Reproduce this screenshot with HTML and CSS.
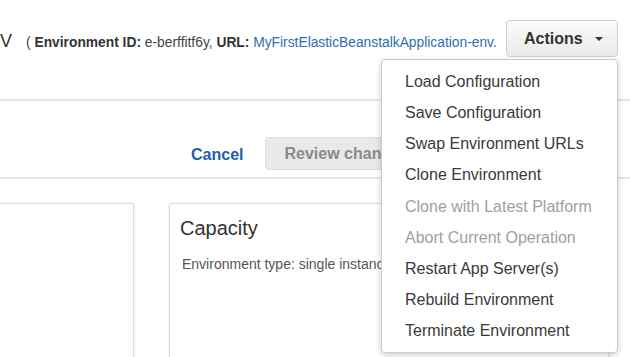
FILE: index.html
```html
<!DOCTYPE html>
<html lang="en">
<head>
  <meta charset="UTF-8" />
  <meta name="viewport" content="width=device-width, initial-scale=1" />
  <title>Environment configuration</title>
  <link rel="stylesheet" href="styles.css">
</head>
<body>
  <header class="env-header">
    <h1 class="env-title">V</h1>
    <p class="env-info">( <b>Environment ID:</b> e-berffitf6y, <b>URL:</b> <a href="#">MyFirstElasticBeanstalkApplication-env.</a></p>
    <div class="actions-wrap">
      <button class="actions-btn" type="button" aria-haspopup="true" aria-expanded="true">Actions <span class="caret"></span></button>
      <ul class="actions-menu" role="menu">
        <li role="menuitem">Load Configuration</li>
        <li role="menuitem">Save Configuration</li>
        <li role="menuitem">Swap Environment URLs</li>
        <li role="menuitem">Clone Environment</li>
        <li role="menuitem" class="disabled">Clone with Latest Platform</li>
        <li role="menuitem" class="disabled">Abort Current Operation</li>
        <li role="menuitem">Restart App Server(s)</li>
        <li role="menuitem">Rebuild Environment</li>
        <li role="menuitem">Terminate Environment</li>
      </ul>
    </div>
  </header>

  <div class="form-actions">
    <a href="#" class="cancel-link">Cancel</a>
    <button class="review-btn" type="button" disabled>Review changes</button>
    <button class="apply-btn" type="button" aria-label="Apply"></button>
  </div>

  <main class="cards">
    <section class="card card-side"></section>
    <section class="card">
      <h2>Capacity</h2>
      <p>Environment type: single instance</p>
    </section>
  </main>
</body>
</html>
```

FILE: styles.css
```css
body {
  margin: 0;
  width: 630px;
  height: 357px;
  overflow: hidden;
  font-family: "Liberation Sans", Arial, sans-serif;
  color: #333;
  background: #fff;
}
.env-header {
  display: flex;
  align-items: center;
  height: 101px;
  box-sizing: border-box;
  padding: 21px 12px 43px 0;
  border-bottom: 2px solid #e6e6e6;
}
.env-title {
  margin: 0;
  font-size: 18px;
  font-weight: normal;
  color: #333;
  position: relative;
  top: 3px;
}
.env-info {
  margin: 0 0 0 14px;
  font-size: 13.8px;
  color: #444;
  white-space: nowrap;
  position: relative;
  top: 4px;
}
.env-info b {
  color: #333;
}
.env-info a {
  color: #2f6db5;
  text-decoration: none;
}
.actions-wrap {
  position: relative;
  margin-left: auto;
}
.actions-btn {
  display: flex;
  align-items: center;
  height: 37px;
  width: 112px;
  padding: 0 14px 0 17px;
  border: 1px solid #cfcfcf;
  border-radius: 4px;
  background: linear-gradient(#fbfbfb, #eaeaea);
  font-family: inherit;
  font-size: 16px;
  font-weight: bold;
  color: #333;
}
.caret {
  margin-left: auto;
  width: 0;
  height: 0;
  border-left: 4px solid transparent;
  border-right: 4px solid transparent;
  border-top: 4px solid #333;
}
.actions-menu {
  position: absolute;
  right: 0;
  top: 39px;
  z-index: 10;
  width: 237px;
  box-sizing: border-box;
  margin: 0;
  padding: 6px 0;
  list-style: none;
  background: #fff;
  border: 1px solid #ccc;
  border-radius: 4px;
  box-shadow: 0 2px 6px rgba(0,0,0,0.2);
}
.actions-menu li {
  padding-left: 23px;
  line-height: 31.15px;
  font-size: 16px;
  color: #3a3a3a;
  white-space: nowrap;
}
.actions-menu li.disabled {
  color: #a0a0a0;
}
.form-actions {
  display: flex;
  align-items: center;
  gap: 22px;
  padding: 36px 14px 7px 191px;
  border-bottom: 2px solid #e6e6e6;
}
.cancel-link {
  font-size: 16px;
  font-weight: bold;
  color: #1f5ea8;
  text-decoration: none;
  margin-top: 3px;
}
.review-btn {
  height: 33px;
  padding: 0 18px;
  border: 1px solid #ddd;
  border-radius: 4px;
  background: #e9e9e9;
  font-family: inherit;
  font-size: 16px;
  font-weight: bold;
  color: #8a8a8a;
}
.apply-btn {
  margin-left: auto;
  height: 33px;
  width: 60px;
  border: 1px solid #1a4f8c;
  border-radius: 4px;
  background: #2a6ebb;
}
.cards {
  display: flex;
  gap: 35px;
  padding-top: 24px;
  margin-left: -20px;
}
.card {
  flex: none;
  width: 440px;
  height: 200px;
  box-sizing: border-box;
  padding: 12px 10px;
  border: 1px solid #ddd;
  border-radius: 2px;
  box-shadow: 0 1px 3px rgba(0,0,0,0.12);
  background: #fff;
}
.card-side {
  width: 154px;
}
.card h2 {
  margin: 0 0 15px 0;
  font-size: 20px;
  line-height: 24px;
  font-weight: normal;
  color: #333;
}
.card p {
  margin: 0 0 0 2px;
  font-size: 14px;
  line-height: 18px;
  color: #555;
  white-space: nowrap;
}
```
